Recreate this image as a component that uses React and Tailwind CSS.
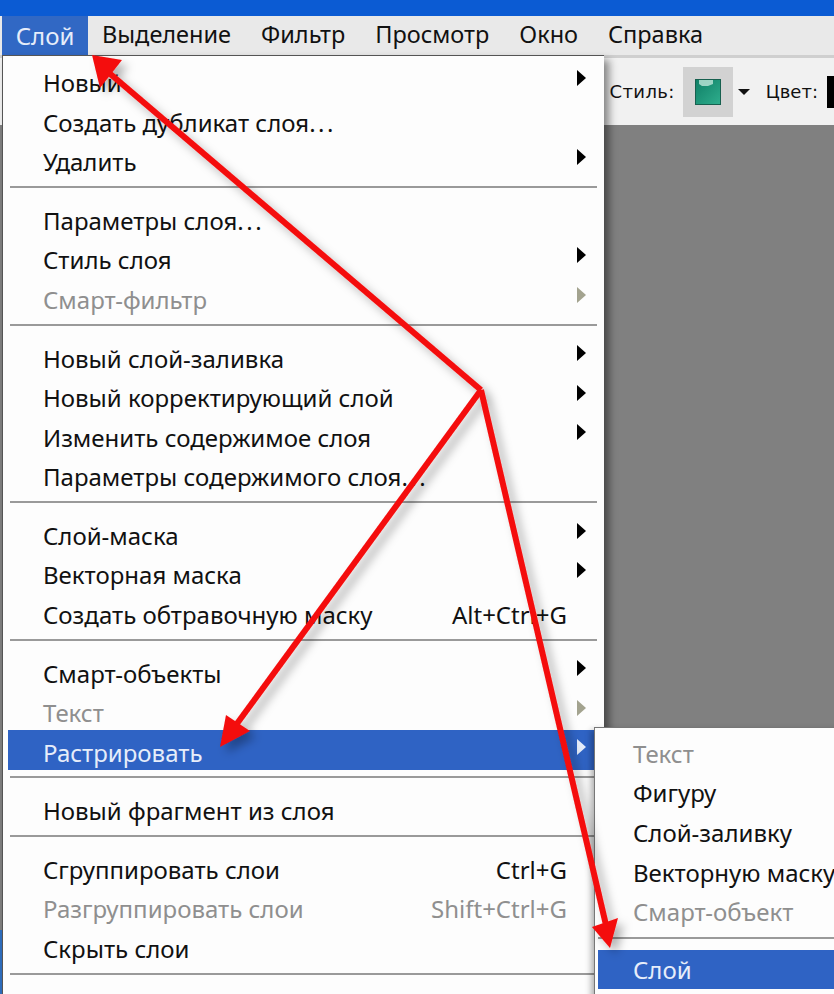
import { Fragment } from 'react'

const groups = [
  [
    { label: 'Новый', sub: true },
    { label: 'Создать дубликат слоя...' },
    { label: 'Удалить', sub: true },
  ],
  [
    { label: 'Параметры слоя...' },
    { label: 'Стиль слоя', sub: true },
    { label: 'Смарт-фильтр', sub: true, disabled: true },
  ],
  [
    { label: 'Новый слой-заливка', sub: true },
    { label: 'Новый корректирующий слой', sub: true },
    { label: 'Изменить содержимое слоя', sub: true },
    { label: 'Параметры содержимого слоя...' },
  ],
  [
    { label: 'Слой-маска', sub: true },
    { label: 'Векторная маска', sub: true },
    { label: 'Создать обтравочную маску', hint: 'Alt+Ctrl+G' },
  ],
  [
    { label: 'Смарт-объекты', sub: true },
    { label: 'Текст', sub: true, disabled: true },
    { label: 'Растрировать', sub: true, active: true },
  ],
  [{ label: 'Новый фрагмент из слоя' }],
  [
    { label: 'Сгруппировать слои', hint: 'Ctrl+G' },
    { label: 'Разгруппировать слои', hint: 'Shift+Ctrl+G', disabled: true },
    { label: 'Скрыть слои' },
  ],
]

const topMenu = ['Выделение', 'Фильтр', 'Просмотр', 'Окно', 'Справка']

function Caret({ color }) {
  return (
    <svg width="9" height="16" viewBox="0 0 9 16" className="absolute right-[18px] top-[9px]">
      <path d="M0 0 L9 8 L0 16 Z" fill={color} />
    </svg>
  )
}

// the dots of "..." sit wider apart in the picture
function Label({ text }) {
  if (!text.endsWith('...')) return <span>{text}</span>
  return (
    <span>
      {text.slice(0, -3)}
      <span className="tracking-[2.5px]">...</span>
    </span>
  )
}

function MenuRow({ item }) {
  const color = item.active ? 'text-[#e6edfa]' : item.disabled ? 'text-[#8f8f8f]' : 'text-[#111]'
  const caret = item.active ? '#e6edfa' : item.disabled ? '#a3a38f' : '#000'
  const box = item.active ? 'bg-[#2f63c4] ml-[5px] pl-[35px]' : 'pl-[40px]'
  return (
    <div className={`relative h-[39.5px] flex items-center pt-[5px] pr-[37px] justify-between ${color} ${box}`}>
      <Label text={item.label} />
      {item.hint && <span>{item.hint}</span>}
      {item.sub && <Caret color={caret} />}
    </div>
  )
}

function Separator() {
  return <div className="h-[2px] bg-[#9a9a9a] mt-[6.5px] mb-[10.7px] ml-[7px] mr-[7px]" />
}

export default function App() {
  return (
    <div className="relative w-[834px] h-[994px] overflow-hidden bg-[#808080] font-['Noto_Sans',sans-serif] text-[24px] leading-none">
      <div className="h-[16px] bg-[#0b5bd3]" />

      {/* menu bar */}
      <div className="h-[39px] bg-[#e9e9e9] flex items-center text-[#111]">
        <div className="ml-[2px] w-[86px] h-full bg-[#3168c4] text-[#e6edfa] flex items-center justify-center">Слой</div>
        <div className="flex ml-[14px] gap-[30px] pb-[2px] text-[23.5px]">
          {topMenu.map((m) => (
            <span key={m}>{m}</span>
          ))}
        </div>
      </div>

      {/* options bar */}
      <div className="h-[70px] bg-[#f1f1f1] border-t-[3px] border-[#cfcfcf] flex items-center justify-end font-['DejaVu_Sans',sans-serif] text-[18px] text-[#111]">
        <span className="tracking-[0.4px]">Стиль:</span>
        <div className="ml-[8px] w-[50px] h-[50px] bg-[#d2d2d2] flex items-center justify-center">
          <svg width="26" height="26" viewBox="0 0 26 26">
            <defs>
              <linearGradient id="swatch" x1="0" y1="0" x2="1" y2="1">
                <stop offset="0" stopColor="#0f7f66" />
                <stop offset="1" stopColor="#2fae8d" />
              </linearGradient>
            </defs>
            <rect x="0.5" y="0.5" width="25" height="25" fill="url(#swatch)" stroke="#17604f" />
            <path d="M4 1 H18 V5 L13 7 H7 L4 5 Z" fill="#bfe6da" fillOpacity="0.8" />
          </svg>
        </div>
        <svg width="12" height="6" viewBox="0 0 12 6" className="ml-[5px]">
          <path d="M0 0 H12 L6 6 Z" fill="#111" />
        </svg>
        <span className="ml-[16px]">Цвет:</span>
        <div className="ml-[9px] w-[7px] h-[32px] bg-black" />
      </div>

      {/* sliver of the window behind the menu */}
      <div className="absolute left-0 bottom-0 w-[2px] h-[64px] bg-[#2f6fc0]" />

      {/* main menu */}
      <div className="absolute left-[2px] top-[55px] w-[602px] h-[960px] bg-[#fdfdfd] border-l border-t border-[#555] pt-[5px] shadow-[5px_5px_8px_rgba(0,0,0,0.45)]">
        {groups.map((g, i) => (
          <Fragment key={i}>
            {g.map((item) => (
              <MenuRow key={item.label} item={item} />
            ))}
            <Separator />
          </Fragment>
        ))}
      </div>

      {/* submenu */}
      <div className="absolute left-[594px] top-[727px] w-[260px] h-[280px] bg-[#fdfdfd] border-l border-t border-[#777] pt-[6px] text-[#111] shadow-[-3px_3px_6px_rgba(0,0,0,0.3)]">
        <div className="h-[39.6px] flex items-center pl-[38px] text-[#8f8f8f]">Текст</div>
        <div className="h-[39.6px] flex items-center pl-[38px]">Фигуру</div>
        <div className="h-[39.6px] flex items-center pl-[38px]">Слой-заливку</div>
        <div className="h-[39.6px] flex items-center pl-[38px]">Векторную маску</div>
        <div className="h-[39.6px] flex items-center pl-[38px] text-[#8f8f8f]">Смарт-объект</div>
        <div className="h-[2px] bg-[#9a9a9a] mt-[5px] mb-[11px] ml-[3px]" />
        <div className="h-[39px] flex items-center pt-[2px] pl-[35px] ml-[3px] bg-[#2f63c4] text-[#e6edfa]">Слой</div>
      </div>

      {/* red arrows */}
      <svg className="absolute inset-0 pointer-events-none" width="834" height="994" viewBox="0 0 834 994">
        <defs>
          <filter id="arrowShadow" x="-10%" y="-10%" width="120%" height="120%">
            <feDropShadow dx="6" dy="6" stdDeviation="5" floodColor="#000" floodOpacity="0.3" />
          </filter>
        </defs>
        <g filter="url(#arrowShadow)" fill="#f40c0c" stroke="#f40c0c">
          <path d="M481 390 L108 72" strokeWidth="6" fill="none" />
          <path d="M481 390 L236 725" strokeWidth="6" fill="none" />
          <path d="M481 390 L606 925" strokeWidth="6" fill="none" />
          <path d="M92 55 L122 60 L100 88 Z" stroke="none" />
          <path d="M220 747 L226 715 L250 731 Z" stroke="none" />
          <path d="M610 948 L592 927 L618 918 Z" stroke="none" />
        </g>
      </svg>
    </div>
  )
}
